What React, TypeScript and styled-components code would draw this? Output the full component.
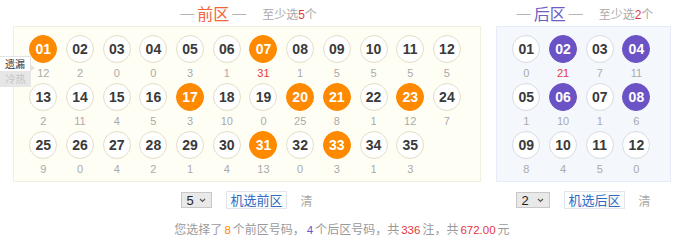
import React from 'react';
import styled, { createGlobalStyle } from 'styled-components';

type Zone = 'front' | 'back';

interface BallData {
  num: number;
  miss: number;
  picked?: boolean;
}

const frontMiss = [12, 2, 0, 0, 3, 1, 31, 1, 5, 5, 5, 5, 2, 11, 4, 5, 3, 10, 0, 25, 8, 1, 12, 7, 9, 0, 4, 2, 1, 4, 13, 0, 3, 1, 3];
const frontPicked = [1, 7, 17, 20, 21, 23, 31, 33];
const backMiss = [0, 21, 7, 11, 1, 10, 1, 6, 8, 4, 5, 0];
const backPicked = [2, 4, 6, 8];

const frontBalls: BallData[] = frontMiss.map((miss, i) => ({ num: i + 1, miss, picked: frontPicked.includes(i + 1) }));
const backBalls: BallData[] = backMiss.map((miss, i) => ({ num: i + 1, miss, picked: backPicked.includes(i + 1) }));

const pad = (n: number) => (n < 10 ? `0${n}` : `${n}`);

const Chevron = () => (
  <svg width="7" height="5" viewBox="0 0 7 5">
    <path d="M1 1 L3.5 3.5 L6 1" fill="none" stroke="#555" strokeWidth="1.2" />
  </svg>
);

const BallGrid: React.FC<{ zone: Zone; balls: BallData[] }> = ({ zone, balls }) => {
  const maxMiss = Math.max(...balls.map((b) => b.miss));
  return (
    <Panel $zone={zone}>
      {balls.map((b) => (
        <Cell key={b.num}>
          <Ball $zone={zone} $picked={b.picked}>{pad(b.num)}</Ball>
          <Miss $hot={b.miss === maxMiss}>{b.miss}</Miss>
        </Cell>
      ))}
    </Panel>
  );
};

const ZoneSection: React.FC<{ zone: Zone; balls: BallData[]; min: number; count: number }> = ({ zone, balls, min, count }) => {
  const label = zone === 'front' ? '前区' : '后区';
  return (
    <Section $zone={zone}>
      <Header>
        <Dash>—</Dash>
        <ZoneName $zone={zone}>{label}</ZoneName>
        <Dash>—</Dash>
        <Hint>
          至少选<em>{min}</em>个
        </Hint>
      </Header>
      <BallGrid zone={zone} balls={balls} />
      <Controls>
        <FakeSelect $wide={zone === 'back'}>
          <span>{count}</span>
          <Chevron />
        </FakeSelect>
        <RandomButton>机选{label}</RandomButton>
        <ClearLink>清</ClearLink>
      </Controls>
    </Section>
  );
};

export default function App() {
  return (
    <Page>
      <GlobalStyle />
      <Main>
        <LegendTabs>
          <TabItem $active>遗漏</TabItem>
          <TabItem>冷热</TabItem>
        </LegendTabs>
        <ZoneSection zone="front" balls={frontBalls} min={5} count={5} />
        <ZoneSection zone="back" balls={backBalls} min={2} count={2} />
      </Main>
      <Summary>
        您选择了<Num $c="#ff8a00">8</Num>个前区号码，<Num $c="#6b55c6">4</Num>个后区号码，共<Num $c="#e4393c">336</Num>注，共
        <Num $c="#e4393c">672.00</Num>元
      </Summary>
    </Page>
  );
}

const GlobalStyle = createGlobalStyle`
  body {
    margin: 0;
    background: #fff;
    font-family: "Liberation Sans", Arial, "Noto Sans CJK SC", sans-serif;
  }
`;

const Page = styled.div`
  width: 671px;
  padding-left: 13px;
  box-sizing: border-box;
`;

const Main = styled.div`
  position: relative;
  display: flex;
  gap: 15px;
`;

const LegendTabs = styled.div`
  position: absolute;
  left: -13px;
  top: 56px;
  width: 31px;
  z-index: 2;
`;

const TabItem = styled.div<{ $active?: boolean }>`
  position: relative;
  height: ${(p) => (p.$active ? '15px' : '16px')};
  line-height: ${(p) => (p.$active ? '14px' : '16px')};
  box-sizing: border-box;
  font-size: 10px;
  text-align: center;
  color: ${(p) => (p.$active ? '#333' : '#c4c4c4')};
  background: ${(p) => (p.$active ? '#fff' : '#e6e6e6')};
  border-top: ${(p) => (p.$active ? '1px solid #e2e2e2' : 'none')};
  border-right: ${(p) => (p.$active ? '1px solid #e2e2e2' : 'none')};
  font-family: "Noto Sans CJK SC", sans-serif;

  ${(p) =>
    p.$active &&
    `
    &::after {
      content: '';
      position: absolute;
      right: -5px;
      top: 8px;
      border-left: 4px solid #e2e2e2;
      border-top: 3px solid transparent;
      border-bottom: 3px solid transparent;
    }
  `}
`;

const Section = styled.div<{ $zone: Zone }>`
  width: ${(p) => (p.$zone === 'front' ? '468px' : '175px')};
  display: flex;
  flex-direction: column;
`;

const Header = styled.div`
  height: 26px;
  display: flex;
  align-items: center;
  justify-content: center;
  font-family: "Noto Sans CJK SC", sans-serif;
`;

const Dash = styled.span`
  color: #b5b5b5;
  font-size: 14px;
  margin: 0 3px;
  font-family: "Liberation Sans", Arial, sans-serif;
`;

const ZoneName = styled.span<{ $zone: Zone }>`
  font-size: 16px;
  color: ${(p) => (p.$zone === 'front' ? '#f2663a' : '#6d5dc4')};
`;

const Hint = styled.span`
  margin-left: 13px;
  font-size: 12px;
  color: #aaa;

  em {
    font-style: normal;
    color: #e4393c;
    font-family: "Liberation Sans", Arial, sans-serif;
  }
`;

const Panel = styled.div<{ $zone: Zone }>`
  display: grid;
  grid-template-columns: repeat(${(p) => (p.$zone === 'front' ? 12 : 4)}, 36.7px);
  grid-auto-rows: 48px;
  padding: 8px 0 2px 11px;
  border: 1px solid ${(p) => (p.$zone === 'front' ? '#f2efdd' : '#e3ecf8')};
  background: ${(p) => (p.$zone === 'front' ? '#fffef5' : '#f4f8fd')};
`;

const Cell = styled.div`
  display: flex;
  flex-direction: column;
  align-items: center;
`;

const Ball = styled.div<{ $zone: Zone; $picked?: boolean }>`
  width: 28px;
  height: 28px;
  box-sizing: border-box;
  border-radius: 50%;
  display: flex;
  align-items: center;
  justify-content: center;
  font-size: 14px;
  font-weight: bold;
  color: ${(p) => (p.$picked ? '#fff' : '#3a3a3a')};
  background: ${(p) => (p.$picked ? (p.$zone === 'front' ? '#ff8a00' : '#6b52c5') : '#fff')};
  border: 1px solid
    ${(p) => (p.$picked ? (p.$zone === 'front' ? '#ff8a00' : '#6b52c5') : p.$zone === 'front' ? '#e3dec6' : '#d8dbe3')};
`;

const Miss = styled.div<{ $hot?: boolean }>`
  height: 20px;
  line-height: 20px;
  font-size: 11px;
  color: ${(p) => (p.$hot ? '#e4393c' : '#aaa')};
`;

const Controls = styled.div`
  height: 36px;
  display: flex;
  align-items: center;
  justify-content: center;
  gap: 14px;
`;

const FakeSelect = styled.div<{ $wide?: boolean }>`
  width: ${(p) => (p.$wide ? '34px' : '31px')};
  height: 16px;
  box-sizing: border-box;
  border: 1px solid #c8c8c8;
  background: #e9e9e9;
  display: flex;
  align-items: center;
  justify-content: space-between;
  padding: 0 5px 0 4px;
  font-size: 13px;
  color: #222;
`;

const RandomButton = styled.div`
  height: 18px;
  line-height: 16px;
  box-sizing: border-box;
  padding: 0 3px;
  border: 1px solid #e2e6ec;
  background: #fcfdff;
  color: #2f6cbf;
  font-size: 13px;
  font-family: "Noto Sans CJK SC", sans-serif;
`;

const ClearLink = styled.span`
  font-size: 12px;
  color: #aaa;
  font-family: "Noto Sans CJK SC", sans-serif;
`;

const Summary = styled.div`
  height: 22px;
  line-height: 22px;
  text-align: center;
  font-size: 12px;
  color: #9a9a9a;
  font-family: "Noto Sans CJK SC", sans-serif;
`;

const Num = styled.span<{ $c: string }>`
  color: ${(p) => p.$c};
  font-size: 11.5px;
  margin: 0 2px;
  font-family: "Liberation Sans", Arial, sans-serif;
`;
